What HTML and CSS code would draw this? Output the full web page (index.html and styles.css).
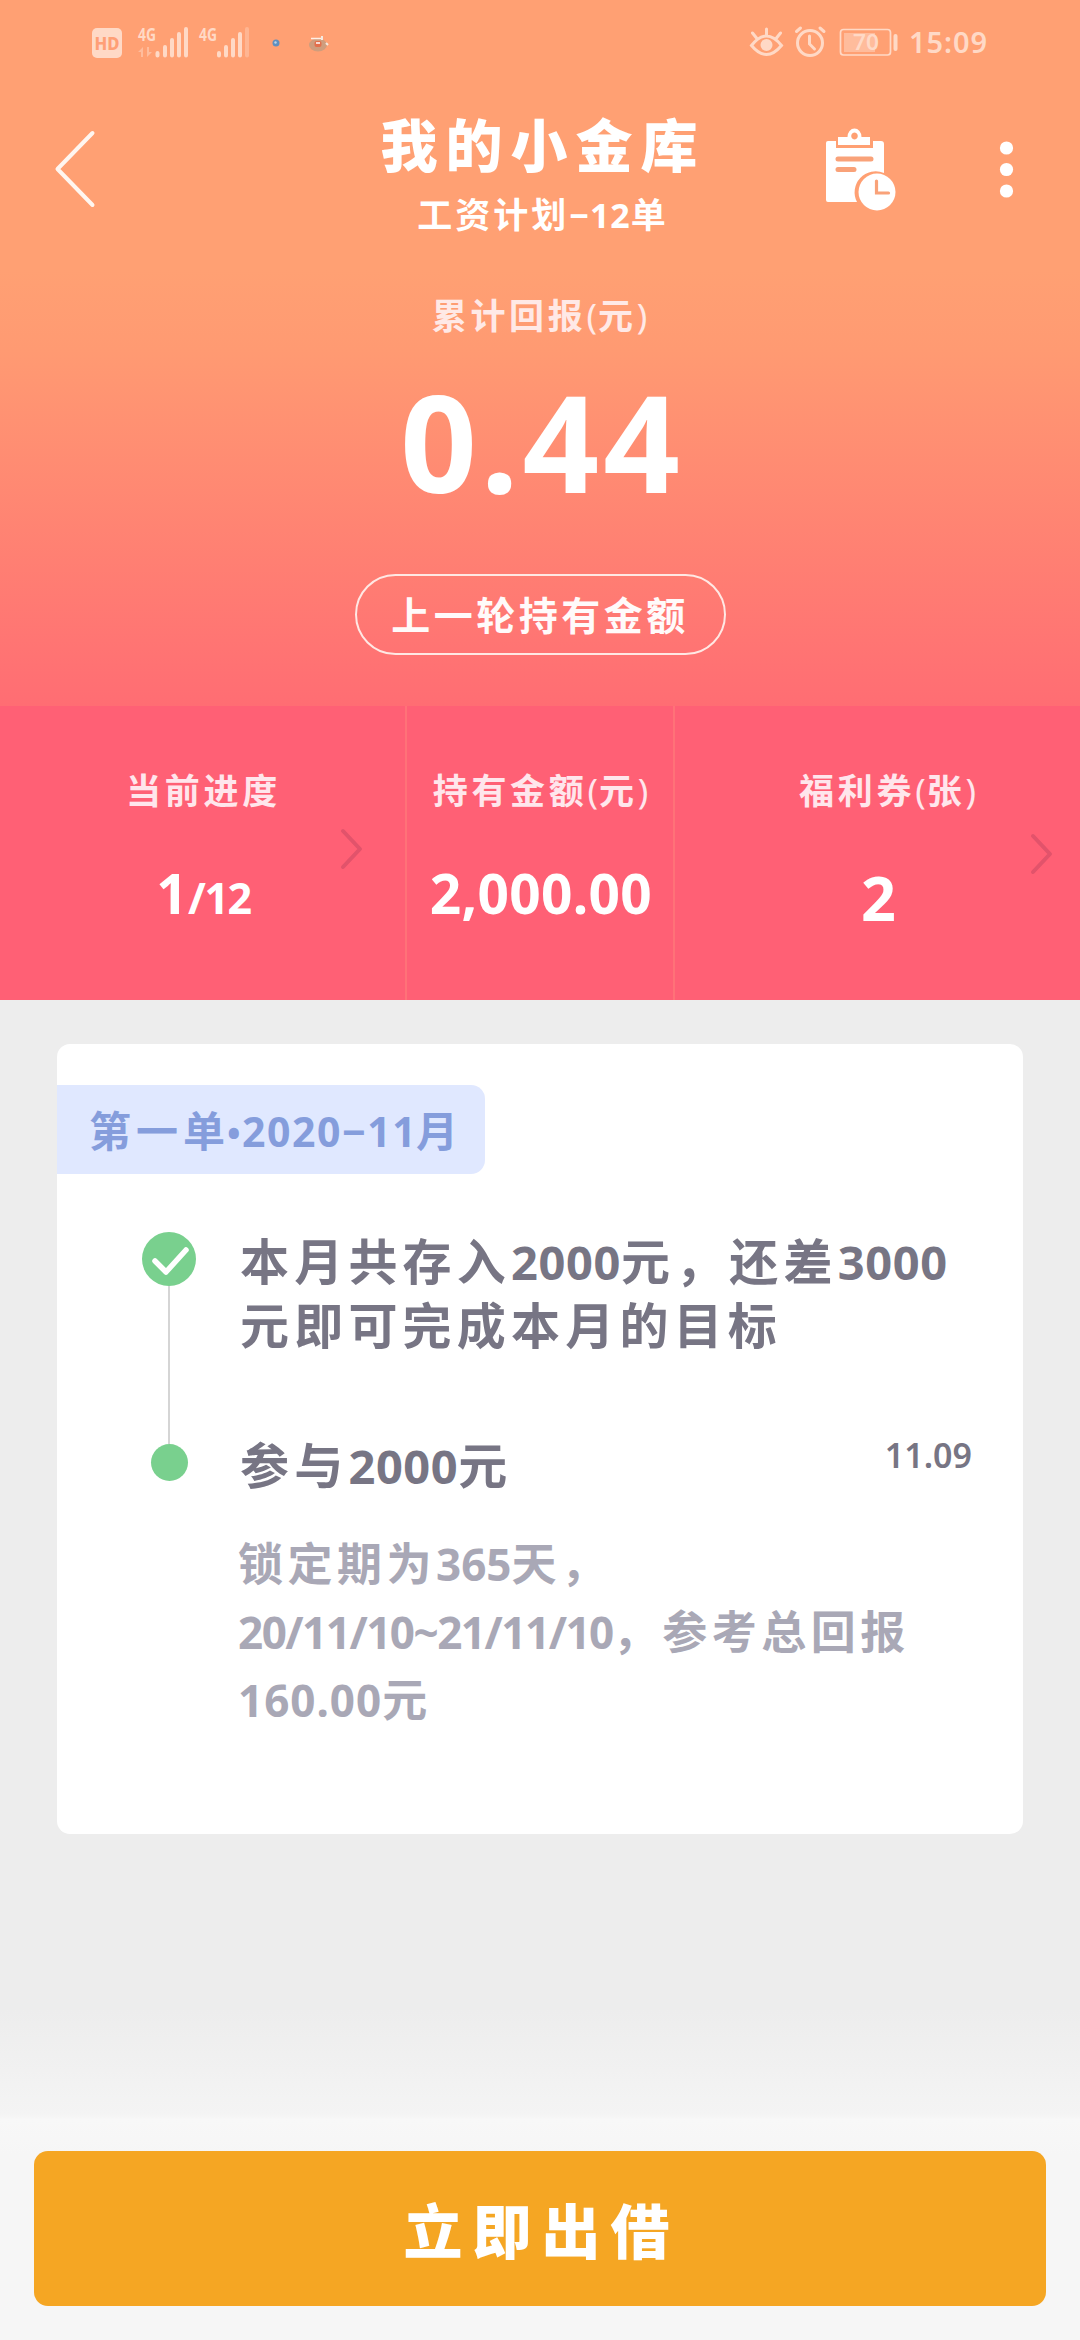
FILE: index.html
```html
<!DOCTYPE html>
<html lang="zh-CN">
<head>
<meta charset="utf-8">
<title>我的小金库</title>
<link rel="stylesheet" href="styles.css">
</head>
<body>
<div class="screen">
  <header class="hero">
    <div class="status">
      <svg class="status-left" width="260" height="40" viewBox="86 22 260 40" fill="#ffd9c6">
        <rect x="92" y="28" width="30" height="30" rx="5"/>
        <text x="107" y="50" class="hd" text-anchor="middle" textLength="25" lengthAdjust="spacingAndGlyphs">HD</text>
        <text x="138" y="41" class="net" textLength="18" lengthAdjust="spacingAndGlyphs">4G</text>
        <path d="M138 52l5-5v10h-2v-5zM147 47v10l5-5h-3v-5z" fill="#ffbc9c"/>
        <g stroke="#ffd9c6" stroke-width="4" stroke-linecap="round">
          <path d="M157.500 53v2.500M165 47v8.500M172 40v15.500M179 34v21.500M186 29v26.500"/>
          <path d="M219 53v2.500M226 47v8.500M233 40v15.500M240 34v21.500"/>
          <path d="M247 29v26.500" stroke="#ffb592"/>
        </g>
        <text x="199" y="41" class="net" textLength="18" lengthAdjust="spacingAndGlyphs">4G</text>
        <circle cx="276" cy="43" r="3.500" fill="#5f8fbe"/><circle cx="275.500" cy="42.500" r="1.200" fill="#b9d4ea"/>
        <ellipse cx="318" cy="45" rx="9" ry="6.500" fill="#cf9d7d"/>
        <path d="M311 38.500h12" stroke="#fff0e6" stroke-width="1.500"/>
        <rect x="314.500" y="41" width="7" height="6" rx="2" fill="#e36f4c"/><path d="M316 43h4" stroke="#fff" stroke-width="1.500"/>
        <path d="M322 36v4M326 43l2 2" stroke="#f4e9e0" stroke-width="2"/>
      </svg>
      <svg class="status-right" width="240" height="40" viewBox="748 22 240 40" fill="none" stroke="#ffd9c6" stroke-width="3" stroke-linecap="round">
        <path d="M751.500 45.500q15-19 30 0q-15 18-30 0zM766.500 29v6M752.500 33l4 5M780.500 33l-4 5"/>
        <circle cx="766.500" cy="45" r="6" fill="#ffd9c6" stroke="none"/>
        <circle cx="810" cy="43" r="12.500"/><path d="M809.500 36v8l5 5M796.500 31.500l4-3.500M824 31.500l-4-3.500"/>
        <rect x="840.500" y="29.500" width="50" height="25.500" rx="3" stroke-width="1.700"/>
        <rect x="844" y="33" width="31" height="19" fill="#ffbc9c" stroke="none"/>
        <path d="M895.500 36v13" stroke-width="4"/>
        <g fill="#ffd9c6" stroke="none">
          <text x="853" y="50" class="batt" textLength="26" lengthAdjust="spacingAndGlyphs">70</text>
          <text x="909" y="53" class="clock" textLength="78">15:09</text>
        </g>
      </svg>
    </div>
    <div class="navbar">
      <svg class="back" width="46" height="86" viewBox="53 127 46 86"><path d="M92.500 133L57.500 169l35 36" fill="none" stroke="#fff6f0" stroke-width="4" stroke-linecap="round" stroke-linejoin="round"/></svg>
      <div class="titles">
        <h1 class="title">我的小金库</h1>
        <p class="subtitle">工资计划<span class="sub-num">−12</span>单</p>
      </div>
      <svg class="plan" width="76" height="90" viewBox="823 125 76 90" fill="#fff">
        <path d="M828 141h8v7h37v-7h8q3 0 3 3v29a21 21 0 0 0-27 29h-29q-2 0-2-2v-57q0-2 2-2z"/>
        <path fill-rule="evenodd" d="M838 137h9.500a7 8.500 0 0 1 14 0h8.500v8h-32zM854.500 132.500a3.300 3.500 0 1 0 .01 0z"/>
        <path d="M838 159h33M838 169.500h16" stroke="#f9a279" stroke-width="5" stroke-linecap="round"/>
        <circle cx="877" cy="192" r="18.500"/>
        <path d="M876.500 181v12h12" fill="none" stroke="#f9a279" stroke-width="3.200" stroke-linecap="round"/>
      </svg>
      <svg class="more" width="20" height="66" viewBox="995 137 20 66" fill="#fff"><circle cx="1005.500" cy="148" r="6.600"/><circle cx="1005.500" cy="169.500" r="6.600"/><circle cx="1005.500" cy="191" r="6.600"/></svg>
    </div>
    <p class="total-label">累计回报<span class="paren">(</span>元<span class="paren">)</span></p>
    <p class="total">0.44</p>
    <div class="pill">上一轮持有金额</div>
  </header>

  <section class="stats">
    <div class="stat">
      <p class="stat-label">当前进度</p>
      <p class="stat-value">1<span class="of">/12</span></p>
      <svg class="chev chev-a" width="28" height="44" viewBox="0 0 28 44"><path d="M4 4l17 18L4 40"/></svg>
    </div>
    <div class="stat">
      <p class="stat-label">持有金额<span class="paren">(</span>元<span class="paren">)</span></p>
      <p class="stat-value">2,000.00</p>
    </div>
    <div class="stat coupons">
      <p class="stat-label">福利券<span class="paren">(</span>张<span class="paren">)</span></p>
      <p class="stat-value two">2</p>
      <svg class="chev chev-b" width="28" height="44" viewBox="0 0 28 44"><path d="M4 4l17 18L4 40"/></svg>
    </div>
  </section>

  <main class="content">
    <article class="card">
      <div class="tag">第一单<span class="tag-num"><span class="dot">•</span>2020<span class="dash">−</span>11</span>月</div>
      <div class="timeline">
        <div class="rail">
          <svg width="54" height="54" viewBox="0 0 54 54"><circle cx="27" cy="27" r="27" fill="#79d08e"/><path d="M13 29l11 11 20-22" fill="none" stroke="#fff" stroke-width="5.500" stroke-linecap="round" stroke-linejoin="round"/></svg>
          <div class="line"></div>
          <div class="node"></div>
        </div>
        <div class="steps">
          <p class="goal">本月共存入<span class="n">2000</span>元，还差<span class="n">3000</span><br>元即可完成本月的目标</p>
          <div class="join">
            <p class="join-text">参与<span class="n">2000</span>元</p>
            <time class="date">11.09</time>
          </div>
          <p class="detail">锁定期为<span class="d">365</span>天，<br><span class="d range">20/11/10~21/11/10</span>，参考总回报<br><span class="d sum">160.00</span>元</p>
        </div>
      </div>
    </article>
  </main>

  <footer class="footer">
    <button class="cta" type="button">立即出借</button>
  </footer>
</div>
</body>
</html>
```

FILE: styles.css
```css
* { box-sizing: border-box; margin: 0; padding: 0; }
body {
  width: 1080px;
  font-family: "Noto Sans", "Noto Sans CJK SC", sans-serif;
  font-weight: 700;
  background: #ededed;
}
.screen { display: flex; flex-direction: column; width: 1080px; height: 2340px; overflow: hidden; }

.hero {
  display: flex;
  flex-direction: column;
  align-items: center;
  height: 706px;
  color: #fff;
  background: linear-gradient(180deg, #ffa073 0, #ffa073 270px, #ff9a72 350px, #ff7073 680px, #ff6d73 706px);
}
.status {
  display: flex;
  justify-content: space-between;
  align-self: stretch;
  height: 84px;
  padding: 22px 92px 0 86px;
}
.hd { font-size: 18px; fill: #ff9f76; font-weight: 800; }
.net { font-size: 18px; }
.batt { font-size: 21px; font-weight: 600; }
.clock { font-size: 29px; font-weight: 600; }

.navbar {
  display: grid;
  grid-template-columns: 323px 434px 76px 20px;
  align-self: stretch;
  height: 166px;
  padding-left: 53px;
  align-items: start;
}
.back { margin-top: 43px; }
.titles { width: 334px; text-align: center; }
.title { margin-top: 21px; font-size: 57px; line-height: 80px; letter-spacing: 8px; font-weight: 900; white-space: nowrap; }
.subtitle { font-size: 35px; line-height: 50px; margin-top: 5px; letter-spacing: 3px; white-space: nowrap; }
.sub-num { font-size: 34px; letter-spacing: 1px; }
.plan { margin-left: 13px; margin-top: 41px; }
.more { margin-left: 110px; margin-top: 53px; }

.total-label { margin-top: 41px; font-size: 35px; line-height: 50px; letter-spacing: 3.700px; color: #ffe9e6; }
.paren { font-weight: 400; letter-spacing: 1px; }
.total { margin-top: 20px; padding-left: 4px; font-size: 134px; line-height: 160px; letter-spacing: 4px; }
.pill {
  margin-top: 53px;
  width: 371px;
  height: 81px;
  border: 2px solid #ffe8e4;
  border-radius: 41px;
  font-size: 39px;
  line-height: 77px;
  letter-spacing: 3.500px;
  text-align: center;
  color: #fffafa;
}

.stats {
  display: grid;
  grid-template-columns: 407px 268px 405px;
  height: 294px;
  background: #ff6075;
  color: #fff;
}
.stat {
  position: relative;
  display: flex;
  flex-direction: column;
  align-items: center;
  padding-top: 60px;
  border-right: 2px solid #ff7278;
  white-space: nowrap;
}
.stat:last-child { border-right: 0; }
.stat-label { padding-left: 2px; font-size: 35px; line-height: 50px; letter-spacing: 3.700px; color: #ffe6ec; }
.stat-value { margin-top: 47px; padding-left: 2px; font-size: 55px; line-height: 60px; letter-spacing: 0.300px; }
.of { font-size: 43px; letter-spacing: -1.500px; }
.coupons .stat-label { padding-left: 21px; }
.two { font-size: 61px; margin-top: 52px; }
.chev { position: absolute; fill: none; stroke: #e2536b; stroke-width: 4; stroke-linecap: round; stroke-linejoin: round; }
.chev-a { left: 339px; top: 121px; }
.chev-b { left: 354px; top: 126px; }

.content { padding: 44px 57px 0; height: 1010px; }
.card { height: 790px; padding-top: 41px; border-radius: 13px; background: #fff; }
.tag {
  width: 428px;
  height: 89px;
  padding-left: 32px;
  border-radius: 0 14px 14px 0;
  background: #e0e8ff;
  color: #859ddc;
  font-size: 42px;
  line-height: 91px;
  letter-spacing: 5px;
  white-space: nowrap;
}
.tag-num { font-size: 41px; letter-spacing: 1.500px; margin-right: -1px; }
.tag-num .dot { margin-left: -3px; font-size: 36px; }
.timeline { display: flex; padding: 58px 0 0 85px; }
.rail { display: flex; flex-direction: column; align-items: center; width: 54px; }
.line { width: 2px; height: 158px; background: #d5d5d5; }
.node { width: 37px; height: 37px; border-radius: 50%; background: #79d08e; }
.steps { flex: 1; margin-top: -2px; padding-left: 44px; color: #777584; white-space: nowrap; }
.goal, .join-text { font-size: 49px; letter-spacing: 5.200px; line-height: 63px; }
.n { font-size: 47px; letter-spacing: 0.600px; }
.join { display: flex; justify-content: space-between; margin-top: 77px; padding-right: 51px; }
.date { font-size: 34px; line-height: 43px; letter-spacing: 0; font-weight: 600; }
.detail { margin-top: 32px; margin-left: -2px; font-size: 45px; line-height: 68px; letter-spacing: 4.500px; color: #a9a8b6; }
.d { font-size: 44px; letter-spacing: 0; }
.range { letter-spacing: -1.500px; }
.sum { letter-spacing: 1px; }

.footer {
  flex: 1;
  padding: 141px 34px 0;
  background: linear-gradient(180deg, #ededed 0, #f4f4f4 104px, #f8f8f8 110px, #f6f6f6 145px, #f6f6f6 100%);
}
.cta {
  display: block;
  width: 1012px;
  height: 155px;
  padding: 5px 0 0 3px;
  border: 0;
  border-radius: 14px;
  background: #f5a623;
  color: #fff;
  font: 900 59px/150px "Noto Sans", "Noto Sans CJK SC", sans-serif;
  letter-spacing: 10px;
}
```
